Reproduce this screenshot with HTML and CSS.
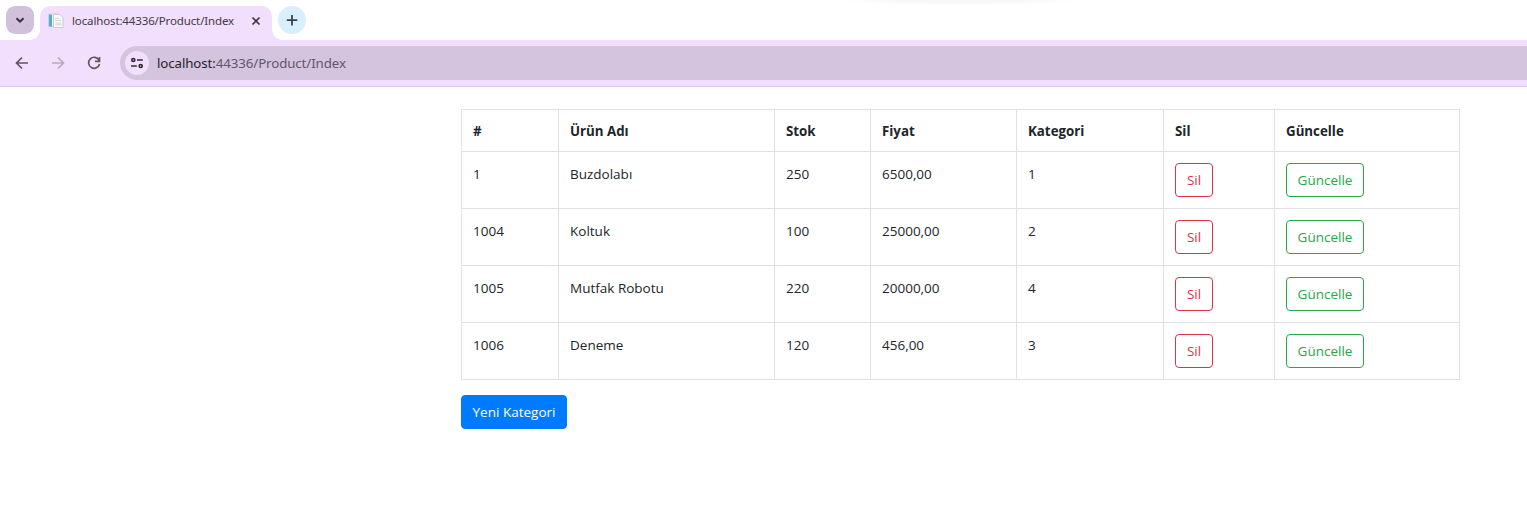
FILE: index.html
```html
<!DOCTYPE html>
<html lang="tr">
<head>
<meta charset="utf-8">
<title>Index</title>
<link rel="stylesheet" href="styles.css">
</head>
<body>
<header class="browser">
  <div class="tabstrip">
    <div class="tab-search"><svg width="28" height="28" viewBox="0 0 28 28"><path d="M10.500 12.200 14 15.700l3.500-3.500" fill="none" stroke="#35303a" stroke-width="2"/></svg></div>
    <div class="tab">
      <svg class="favicon" width="16" height="16" viewBox="0 0 16 16"><path d="M.5 1h10.500v12.500H.5z" fill="#f5f7f9" stroke="#cfd3d8"/><path d="M1 1.500h3v12H1z" fill="#58a9db"/><path d="M5.500 1.500h6.500l3 3v10H5.500z" fill="#fafafa" stroke="#cbcdd0"/><path d="M7.500 9.500h6v3h-6z" fill="#dfe2e5"/><path d="M7 5.500h4M7 7.500h6" stroke="#d5d8db"/></svg>
      <span class="tab-title">localhost:44336/Product/Index</span>
      <svg class="close" width="10" height="10" viewBox="0 0 10 10"><path d="m1.500 1.500 7 7m0-7-7 7" stroke="#3d3842" stroke-width="1.700"/></svg>
    </div>
    <div class="new-tab"><svg width="28" height="28" viewBox="0 0 28 28"><path d="M14 9v10.500M8.800 14.200h10.500" stroke="#3d4247" stroke-width="1.800"/></svg></div>
  </div>
  <div class="toolbar">
    <svg class="nav" width="16" height="16" viewBox="0 0 16 16"><path d="M14 8H3M8 2.500 2.500 8 8 13.500" fill="none" stroke="#5b5660" stroke-width="1.700"/></svg>
    <svg class="nav" width="16" height="16" viewBox="0 0 16 16"><path d="M2 8h11M8 2.500 13.500 8 8 13.500" fill="none" stroke="#b5abbd" stroke-width="1.700"/></svg>
    <svg class="nav" width="16" height="16" viewBox="0 0 16 16"><path d="M13 5.200A5.500 5.500 0 1 0 13.500 9M13.500 2v4.300H9" fill="none" stroke="#5b5660" stroke-width="1.700"/></svg>
    <div class="address">
      <div class="site-info"><svg width="24" height="24" viewBox="0 0 24 24" fill="none" stroke="#2e2933" stroke-width="1.700"><circle cx="8.300" cy="9" r="1.500"/><path d="M12 9h5.800M6 15h5.800"/><circle cx="15.700" cy="15" r="1.500"/></svg></div>
      <span class="url"><b>localhost:</b>44336/Product/Index</span>
    </div>
  </div>
</header>
<main class="content">
  <table class="products">
    <colgroup><col class="c-id"><col class="c-name"><col class="c-stock"><col class="c-price"><col class="c-category"><col class="c-delete"><col class="c-update"></colgroup>
    <thead><tr><th>#</th><th>Ürün Adı</th><th>Stok</th><th>Fiyat</th><th>Kategori</th><th>Sil</th><th>Güncelle</th></tr></thead>
    <tbody>
      <tr><td>1</td><td>Buzdolabı</td><td>250</td><td>6500,00</td><td>1</td><td><a class="btn danger">Sil</a></td><td><a class="btn success">Güncelle</a></td></tr>
      <tr><td>1004</td><td>Koltuk</td><td>100</td><td>25000,00</td><td>2</td><td><a class="btn danger">Sil</a></td><td><a class="btn success">Güncelle</a></td></tr>
      <tr><td>1005</td><td>Mutfak Robotu</td><td>220</td><td>20000,00</td><td>4</td><td><a class="btn danger">Sil</a></td><td><a class="btn success">Güncelle</a></td></tr>
      <tr><td>1006</td><td>Deneme</td><td>120</td><td>456,00</td><td>3</td><td><a class="btn danger">Sil</a></td><td><a class="btn success">Güncelle</a></td></tr>
    </tbody>
  </table>
  <a class="btn primary">Yeni Kategori</a>
</main>
</body>
</html>
```

FILE: styles.css
```css
* { box-sizing: border-box; }
body { margin: 0; height: 527px; overflow: hidden; background: #fff; color: #212529; font: 13.5px/22px "Open Sans", "Noto Sans", sans-serif; }
svg { display: block; flex: none; }
.browser { height: 87px; background: #f2dffd; border-bottom: 1px solid #d4c4de; font-family: "Noto Sans", sans-serif; }
.tabstrip { display: flex; height: 40px; padding: 6px 6px 0; background: radial-gradient(ellipse 120px 5px at 960px 0, #f8f8f8 60%, #fff); }
.tab-search { width: 28px; height: 28px; border-radius: 9px; background: #d1c1db; }
.tab { position: relative; display: flex; align-items: center; width: 232px; height: 34px; margin-left: 6px; padding: 0 11px 5px 8px; border-radius: 10px 10px 0 0; background: #f2dffd; }
.tab::before, .tab::after { content: ""; position: absolute; bottom: 0; width: 10px; height: 10px; }
.tab::before { left: -10px; background: radial-gradient(circle at 0 0, transparent 9.5px, #f2dffd 10px); }
.tab::after { right: -10px; background: radial-gradient(circle at 100% 0, transparent 9.5px, #f2dffd 10px); }
.tab-title { margin-left: 8px; color: #413b46; font-size: 11.5px; letter-spacing: -0.13px; white-space: nowrap; }
.close { margin-left: auto; }
.new-tab { width: 28px; height: 28px; margin-left: 6px; border-radius: 50%; background: #d9effe; }
.toolbar { display: flex; align-items: center; height: 46px; padding-left: 14px; }
.nav { margin-right: 20px; }
.address { display: flex; flex: 1; align-items: center; height: 34px; margin-left: -2px; padding-left: 5px; border-radius: 17px 0 0 17px; background: #d4c4de; }
.site-info { width: 24px; height: 24px; border-radius: 50%; background: #f2dffd; }
.url { margin-left: 8px; color: #605768; font-size: 13.3px; letter-spacing: -0.1px; }
.url b { color: #241f29; font-weight: 400; }
.content { padding: 22px 67px 0 461px; }
.products { width: 999px; margin-bottom: 15px; table-layout: fixed; border-collapse: separate; border-spacing: 0; border: solid #dee2e6; border-width: 1px 0 0 1px; }
.c-id { width: 97px; }
.c-name { width: 216px; }
.c-stock { width: 96px; }
.c-price { width: 146px; }
.c-category { width: 147px; }
.c-delete { width: 111px; }
.c-update { width: 185px; }
th, td { padding: 11px 0 0 11px; border: solid #dee2e6; border-width: 0 1px 1px 0; text-align: left; vertical-align: top; }
th { height: 42px; padding-top: 10px; font-size: 13.3px; }
td { height: 57px; }
.btn { display: inline-block; height: 34px; padding: 5px 0; border: 1px solid; border-radius: 4px; text-align: center; vertical-align: top; }
.danger { width: 38px; color: #dc3545; }
.success { width: 78px; color: #28a745; }
.primary { width: 106px; border-color: #007bff; background: #007bff; color: #fff; }
```
